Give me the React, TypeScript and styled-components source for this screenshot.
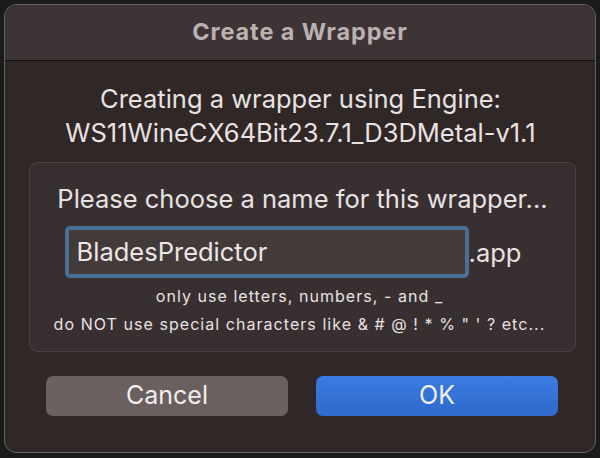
import React from "react"
import styled, { createGlobalStyle } from "styled-components"

const GlobalStyle = createGlobalStyle`
  html, body {
    margin: 0;
    padding: 0;
    background: #1c1b1b;
  }
  body {
    font-family: Inter, "Noto Sans", sans-serif;
  }
`

const Screen = styled.div`
  width: 600px;
  height: 458px;
  padding: 4px 4px 5px;
  box-sizing: border-box;
`

const Window = styled.div`
  height: 100%;
  border-radius: 12px;
  border: 1px solid #676060;
  background: #302727;
  overflow: hidden;
  display: flex;
  flex-direction: column;
  box-sizing: border-box;
`

const TitleBar = styled.div`
  height: 56px;
  flex: none;
  background: #3c3435;
  border-bottom: 1px solid #141111;
  display: flex;
  align-items: center;
  justify-content: center;
  color: #bcb1b1;
  font-weight: 700;
  font-size: 23.5px;
  letter-spacing: 0.9px;
  padding-bottom: 3px;
  box-sizing: border-box;
`

const Body = styled.div`
  flex: 1;
  display: flex;
  flex-direction: column;
  padding: 21px 19px 0 24px;
`

const Intro = styled.p`
  margin: 0;
  text-align: center;
  color: #e8e2e2;
  font-size: 25.5px;
  line-height: 34px;
  margin-left: -4px;
`

const Panel = styled.div`
  margin-top: 12px;
  height: 190px;
  box-sizing: border-box;
  border: 1px solid #4a4142;
  border-radius: 8px;
  background: #382f30;
  display: flex;
  flex-direction: column;
  align-items: center;
  padding-top: 20px;
`

const Prompt = styled.div`
  color: #e8e2e2;
  font-size: 25.5px;
  line-height: 32px;
`

const FieldRow = styled.div`
  margin-top: 11px;
  display: flex;
  align-items: center;
  margin-right: 19px;
`

const Field = styled.div`
  width: 404px;
  height: 52px;
  box-sizing: border-box;
  border: 4px solid #4a6f98;
  border-radius: 5px;
  background: #433a3a;
  display: flex;
  align-items: center;
  padding-left: 8px;
  padding-bottom: 1px;
  color: #ece6e6;
  font-size: 25.5px;
`

const Suffix = styled.span`
  color: #e8e2e2;
  font-size: 25.5px;
  margin-left: 0;
`

const Hint = styled.div`
  color: #e8e2e2;
  font-size: 16px;
  letter-spacing: 1.05px;
  line-height: 28px;
  text-align: center;
  margin-top: 4px;
  margin-left: -6px;
`

const Buttons = styled.div`
  display: flex;
  gap: 28px;
  margin-top: 24px;
  padding-left: 17px;
`

const Button = styled.button<{ $primary?: boolean }>`
  width: 242px;
  height: 40px;
  border: none;
  border-radius: 7px;
  font-family: inherit;
  font-size: 25px;
  color: #f2eeee;
  background: ${(p) =>
    p.$primary ? "linear-gradient(#3b7be2, #2f6acc)" : "#6a6060"};
  padding: 0 0 2px;
`

export default function App() {
  return (
    <Screen>
      <GlobalStyle />
      <Window>
        <TitleBar>Create a Wrapper</TitleBar>
        <Body>
          <Intro>
            Creating a wrapper using Engine:
            <br />
            WS11WineCX64Bit23.7.1_D3DMetal-v1.1
          </Intro>
          <Panel>
            <Prompt>Please choose a name for this wrapper...</Prompt>
            <FieldRow>
              <Field>BladesPredictor</Field>
              <Suffix>.app</Suffix>
            </FieldRow>
            <Hint>
              only use letters, numbers, - and _
              <br />
              do NOT use special characters like &amp; # @ ! * % " ' ? etc...
            </Hint>
          </Panel>
          <Buttons>
            <Button>Cancel</Button>
            <Button $primary>OK</Button>
          </Buttons>
        </Body>
      </Window>
    </Screen>
  )
}
